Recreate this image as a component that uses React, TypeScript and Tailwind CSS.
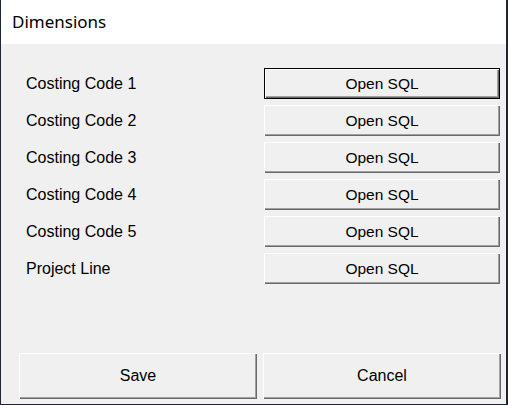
import React from "react";

const bevel =
  "shadow-[inset_1px_1px_0_#ffffff,inset_-1px_-1px_0_#696969,inset_-2px_-2px_0_#a0a0a0]";

function SqlButton({ focused }: { focused?: boolean }) {
  return (
    <div
      className={
        "h-[31px] w-[236px] shrink-0 " + (focused ? "border border-black" : "")
      }
    >
      <button
        className={
          "flex h-full w-full items-center justify-center bg-[#f0f0f0] pt-[1px] text-[15.5px] text-black " +
          bevel
        }
        style={{ fontFamily: '"Liberation Sans", Arial, sans-serif' }}
      >
        Open SQL
      </button>
    </div>
  );
}

const rows = [
  "Costing Code 1",
  "Costing Code 2",
  "Costing Code 3",
  "Costing Code 4",
  "Costing Code 5",
  "Project Line",
];

export default function App() {
  return (
    <div className="flex h-[405px] w-[508px] flex-col border-b border-l border-r-2 border-[#1c2733] bg-[#f0f0f0]">
      <div
        className="flex h-[44px] items-center bg-white pl-[11px] pb-[1px] text-[17px] text-black"
        style={{ fontFamily: '"Noto Sans", "Open Sans", sans-serif' }}
      >
        Dimensions
      </div>
      <div
        className="flex flex-1 flex-col gap-[6px] pt-[24px]"
        style={{ fontFamily: '"Liberation Sans", Arial, sans-serif' }}
      >
        {rows.map((r, i) => (
          <div key={r} className="flex h-[31px] items-start">
            <div className="w-[263px] shrink-0 pl-[25px] pt-[4px] text-[16px] text-black">
              {r}
            </div>
            <SqlButton focused={i === 0} />
          </div>
        ))}
      </div>
      <div
        className="flex gap-[6px] pb-[5px] pl-[18px]"
        style={{ fontFamily: '"Liberation Sans", Arial, sans-serif' }}
      >
        <button
          className={
            "flex h-[46px] w-[238px] items-center justify-center bg-[#f0f0f0] text-[16px] text-black " +
            bevel
          }
        >
          Save
        </button>
        <button
          className={
            "flex h-[46px] w-[238px] items-center justify-center bg-[#f0f0f0] text-[16px] text-black " +
            bevel
          }
        >
          Cancel
        </button>
      </div>
    </div>
  );
}
